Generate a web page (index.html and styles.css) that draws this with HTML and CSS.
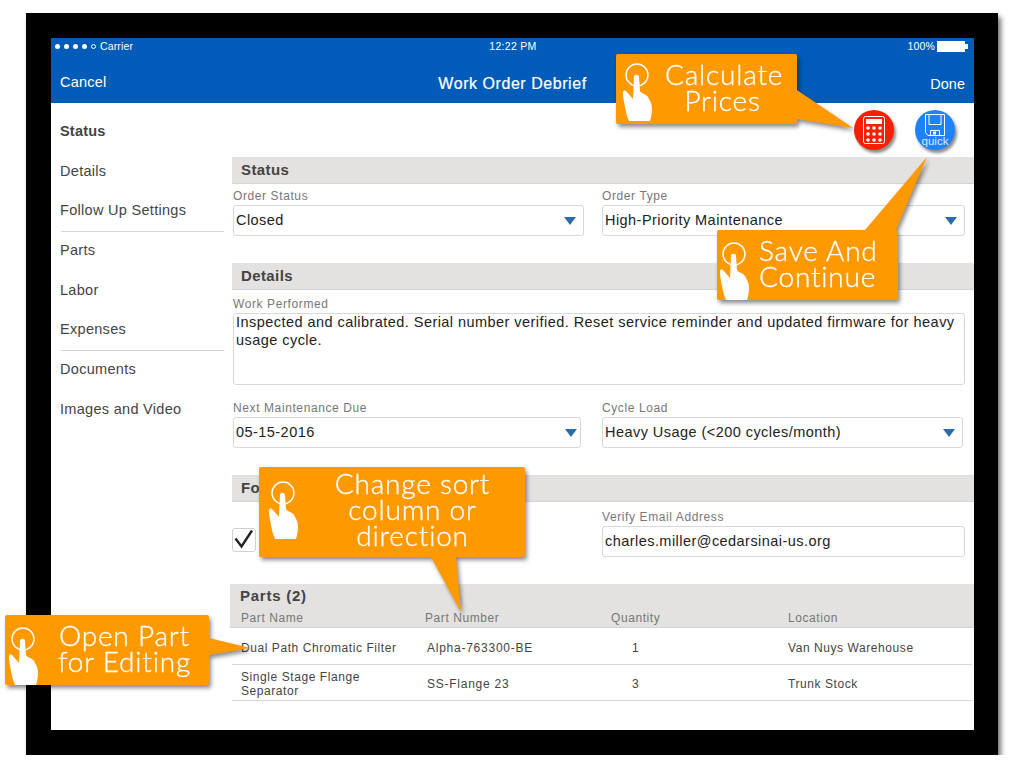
FILE: index.html
```html
<!DOCTYPE html>
<html lang="en">
<head>
    <meta charset="UTF-8">
    <meta name="viewport" content="width=device-width, initial-scale=1.0">
    <title>Work Order Debrief</title>
    <link rel="stylesheet" href="styles.css">
</head>
<body>

<svg width="0" height="0" class="defs">
    <symbol id="hand" viewBox="0 0 40 70">
        <circle cx="21" cy="21" r="11" fill="none" stroke="#fff" stroke-width="1.4"/>
        <path fill="#fff" d="M18 23c0-3 5-3 5 0l1 14c1 2 3 2 4 3 2 1 4 2 5 5 2 3 3 6 3 10 0 4-1 9-2 12H13c-2-4-3-9-4-14-1-5-2-10-2-14 0-3 2-3 4-1 2 2 4 5 6 7z"/>
    </symbol>
</svg>

<div class="frame">
    <div class="screen">
        <header class="topbar">
            <div class="statusbar">
                <div class="carrier">
                    <span class="dot"></span><span class="dot"></span><span class="dot"></span><span class="dot"></span><span class="dot empty"></span>
                    <span>Carrier</span>
                </div>
                <div class="clock">12:22 PM</div>
                <div class="battery-wrap">
                    <span>100%</span>
                    <span class="battery"></span>
                </div>
            </div>
            <div class="navbar">
                <span class="nav-cancel">Cancel</span>
                <span class="nav-title">Work Order Debrief</span>
                <span class="nav-done">Done</span>
            </div>
        </header>

        <div class="content">
            <nav class="sidebar">
                <a class="side-item active">Status</a>
                <a class="side-item">Details</a>
                <a class="side-item divided">Follow Up Settings</a>
                <a class="side-item">Parts</a>
                <a class="side-item">Labor</a>
                <a class="side-item divided">Expenses</a>
                <a class="side-item">Documents</a>
                <a class="side-item">Images and Video</a>
            </nav>

            <main class="form">
                <div class="actions">
                    <div class="round-btn red">
                        <svg width="22" height="28" viewBox="0 0 22 28" fill="none" stroke="#fff">
                            <rect x="0.5" y="0.5" width="21" height="27" rx="2"/>
                            <rect x="3" y="3" width="16" height="5" fill="#fff" stroke="none"/>
                            <g fill="#fff" stroke="none">
                                <circle cx="5" cy="12" r="1.8"/><circle cx="11" cy="12" r="1.8"/><circle cx="17" cy="12" r="1.8"/>
                                <circle cx="5" cy="18" r="1.8"/><circle cx="11" cy="18" r="1.8"/><circle cx="17" cy="18" r="1.8"/>
                                <circle cx="5" cy="24" r="1.8"/><circle cx="11" cy="24" r="1.8"/><circle cx="17" cy="24" r="1.8"/>
                            </g>
                        </svg>
                    </div>
                    <div class="round-btn blue">
                        <svg class="floppy" width="20" height="22" viewBox="0 0 20 22" fill="none" stroke="#fff">
                            <path d="M0.5 0.5h19v21H3l-2.5-3z"/>
                            <path d="M4 0.5v10h12V0.5"/>
                            <path d="M5.5 21.5v-5h9v5"/>
                            <rect x="8" y="17.5" width="3" height="3" fill="#fff" stroke="none"/>
                        </svg>
                        <span class="quick">quick</span>
                    </div>
                </div>

                <section class="section">
                    <h2 class="band">Status</h2>
                    <div class="row">
                        <div class="field w351">
                            <label class="lbl">Order Status</label>
                            <div class="box select">Closed</div>
                        </div>
                        <div class="field w363">
                            <label class="lbl">Order Type</label>
                            <div class="box select">High-Priority Maintenance</div>
                        </div>
                    </div>
                </section>

                <section class="section details">
                    <h2 class="band">Details</h2>
                    <div class="field field-area">
                        <label class="lbl">Work Performed</label>
                        <div class="box area">Inspected and calibrated. Serial number verified. Reset service reminder and updated firmware for heavy usage cycle.</div>
                    </div>
                    <div class="row row-next">
                        <div class="field w348">
                            <label class="lbl">Next Maintenance Due</label>
                            <div class="box select near">05-15-2016</div>
                        </div>
                        <div class="field w361">
                            <label class="lbl">Cycle Load</label>
                            <div class="box select">Heavy Usage (&lt;200 cycles/month)</div>
                        </div>
                    </div>
                </section>

                <section class="section follow">
                    <h2 class="band">Follow Up Settings</h2>
                    <div class="row row-follow">
                        <div class="check-col">
                            <div class="check">
                                <svg width="22" height="22" viewBox="0 0 22 22" fill="none" stroke="#222" stroke-width="2.4">
                                    <path d="M2.5 9.5l6 8L19 1.5"/>
                                </svg>
                            </div>
                        </div>
                        <div class="field w363">
                            <label class="lbl">Verify Email Address</label>
                            <div class="box">charles.miller@cedarsinai-us.org</div>
                        </div>
                    </div>
                </section>

                <section class="parts">
                    <div class="parts-head">
                        <h2 class="parts-title">Parts (2)</h2>
                        <div class="tr th">
                            <span>Part Name</span><span>Part Number</span><span>Quantity</span><span>Location</span>
                        </div>
                    </div>
                    <div class="tr td">
                        <span class="name">Dual Path Chromatic Filter</span><span class="num">Alpha-763300-BE</span><span class="qty">1</span><span>Van Nuys Warehouse</span>
                    </div>
                    <div class="tr td">
                        <span class="name">Single Stage Flange Separator</span><span class="num">SS-Flange 23</span><span class="qty">3</span><span>Trunk Stock</span>
                    </div>
                </section>
            </main>
        </div>
    </div>
</div>

<!-- callouts sit over the screenshot -->
<div class="callout c-calc">
    <svg class="tail" width="60" height="42" viewBox="0 0 60 42"><path fill="#ff9900" d="M0 0L56 38 0 29z"/></svg>
    <svg class="hand"><use href="#hand"/></svg>
    <div class="callout-text">Calculate<br>Prices</div>
</div>
<div class="callout c-save">
    <svg class="tail" width="66" height="75" viewBox="0 0 66 75"><path fill="#ff9900" d="M0 74L62 1 31 74z"/></svg>
    <svg class="hand"><use href="#hand"/></svg>
    <div class="callout-text">Save And<br>Continue</div>
</div>
<div class="callout c-sort">
    <svg class="tail" width="34" height="58" viewBox="0 0 34 58"><path fill="#ff9900" d="M0 0L30 55 25 0z"/></svg>
    <svg class="hand"><use href="#hand"/></svg>
    <div class="callout-text">Change sort<br>column or<br>direction</div>
</div>
<div class="callout c-open">
    <svg class="tail" width="44" height="20" viewBox="0 0 44 20"><path fill="#ff9900" d="M0 0L41 10 0 17z"/></svg>
    <svg class="hand"><use href="#hand"/></svg>
    <div class="callout-text">Open Part<br>for Editing</div>
</div>

</body>
</html>
```

FILE: styles.css
```css
/* page and device frame */
body {
    margin: 0;
    background-color: #fff;
    font-family: "Liberation Sans", Arial, sans-serif;
    color: #444;
}

.defs {
    display: block;
    height: 0;
}

.frame {
    width: 922px;
    height: 692px;
    margin: 13px 0 0 26px;
    padding: 25px;
    background-color: #000;
    box-shadow: 3px 4px 5px rgba(0, 0, 0, 0.55);
}

.screen {
    height: 692px;
    width: 923px;
    background-color: #fff;
    display: flex;
    flex-direction: column;
    overflow: hidden;
}

/* blue top bar */
.topbar {
    height: 65px;
    background-color: #005cb8;
    color: #fff;
}

.statusbar {
    height: 16px;
    padding: 0 1px 0 4px;
    display: grid;
    grid-template-columns: 1fr auto 1fr;
    align-items: center;
    font-size: 10.5px;
    letter-spacing: 0.15px;
}

.carrier {
    display: flex;
    align-items: center;
    gap: 4px;
}

.dot {
    width: 5px;
    height: 5px;
    border-radius: 50%;
    background-color: #fff;
}

.dot.empty {
    width: 3px;
    height: 3px;
    background-color: transparent;
    border: 1px solid #fff;
}

.clock {
    letter-spacing: 0.3px;
    margin-left: -2px;
}

.battery-wrap {
    display: flex;
    justify-content: flex-end;
    align-items: center;
    gap: 2px;
    padding-right: 8px;
}

.battery {
    width: 28px;
    height: 11px;
    background-color: #fff;
    position: relative;
}

.battery::after {
    content: "";
    position: absolute;
    right: -3px;
    top: 3px;
    width: 3px;
    height: 5px;
    background-color: #fff;
}

.navbar {
    display: grid;
    grid-template-columns: 1fr auto 1fr;
    align-items: center;
    height: 49px;
    box-sizing: border-box;
    padding: 11px 9px 0;
}

.nav-cancel {
    font-size: 14.5px;
    letter-spacing: 0.2px;
    margin-top: -4px;
}

.nav-title {
    font-size: 16px;
    letter-spacing: 0.55px;
    -webkit-text-stroke: 0.2px #fff;
}

.nav-done {
    font-size: 14.5px;
    text-align: right;
}

/* sidebar + form */
.content {
    flex: 1;
    display: flex;
}

.sidebar {
    width: 181px;
    box-sizing: border-box;
    padding: 9px 8px 0 9px;
    flex-shrink: 0;
}

.side-item {
    display: block;
    height: 39.7px;
    line-height: 39px;
    font-size: 14.5px;
    letter-spacing: 0.3px;
    box-sizing: border-box;
}

.side-item.active {
    font-weight: bold;
    letter-spacing: 0.2px;
}

.side-item.divided {
    height: 40.7px;
    margin: 0 0 -1px 1px;
    border-bottom: 1px solid #d6d6d6;
    text-indent: -1px;
}

.form {
    flex: 1;
    min-width: 0;
}

.actions {
    height: 54px;
    box-sizing: border-box;
    padding: 7px 19px 0 0;
    display: flex;
    justify-content: flex-end;
    gap: 21px;
}

.round-btn {
    width: 40px;
    height: 40px;
    border-radius: 50%;
    box-shadow: 2px 3px 3px rgba(0, 0, 0, 0.45);
    display: flex;
    align-items: center;
    justify-content: center;
    position: relative;
}

.red {
    background-color: #f52000;
}

.blue {
    background-color: #1e82fa;
    align-items: flex-start;
}

.floppy {
    margin-top: 4px;
}

.quick {
    position: absolute;
    left: 0;
    right: 0;
    top: 24px;
    text-align: center;
    font-size: 11.5px;
    line-height: 14px;
    color: #dcebff;
}

.section {
    height: 106px;
}

.section.details {
    height: 212px;
}

.section.follow {
    height: 109px;
}

.band {
    margin: 0;
    height: 26px;
    line-height: 26px;
    padding-left: 9px;
    background-color: #e3e2e0;
    border-bottom: 1px solid #d4d4d4;
    font-size: 15px;
    letter-spacing: 0.4px;
    font-weight: bold;
    color: #444;
}

.row {
    display: flex;
    justify-content: space-between;
    padding-right: 9px;
    align-items: flex-end;
}

.row-next {
    padding-right: 11px;
    margin-top: 11px;
}

.row-follow {
    padding-top: 3px;
}

.field {
    padding-left: 1px;
}

.w351 { width: 351px; }
.w363 { width: 363px; padding-left: 0; }
.w348 { width: 348px; }
.w361 { width: 361px; padding-left: 0; }

.field-area {
    margin-right: 9px;
}

.field-area .lbl {
    height: 23px;
    line-height: 28px;
}

.lbl {
    display: block;
    height: 21px;
    line-height: 25px;
    font-size: 12px;
    letter-spacing: 0.6px;
    color: #777;
}

.box {
    height: 29px;
    line-height: 29px;
    padding: 0 2px;
    border: 1px solid #d8d8d8;
    border-radius: 3px;
    font-size: 14.5px;
    letter-spacing: 0.45px;
    color: #222;
    position: relative;
    background-color: #fff;
}

.select::after {
    content: "";
    position: absolute;
    right: 7px;
    top: 11px;
    border-left: 6px solid transparent;
    border-right: 6px solid transparent;
    border-top: 8px solid #2d6ca8;
}

.select.near::after {
    right: 3px;
}

.box.area {
    height: 70px;
    line-height: 17.5px;
    white-space: normal;
}

.check-col {
    width: 370px;
    padding-bottom: 5px;
}

.check {
    width: 22px;
    height: 22px;
    border: 1px solid #d0d0d0;
    border-radius: 3px;
}

.check svg {
    display: block;
}

/* parts table */
.parts {
    margin-left: -2px;
}

.parts-head {
    background-color: #e3e2e0;
    border-bottom: 1px solid #d4d4d4;
    height: 43px;
}

.parts-title {
    margin: 0;
    padding: 3px 0 3px 10px;
    line-height: 17px;
    font-size: 15px;
    letter-spacing: 0.75px;
    font-weight: bold;
    color: #444;
}

.tr {
    display: grid;
    grid-template-columns: 184px 186px 177px 1fr;
    padding-left: 11px;
    font-size: 12px;
    letter-spacing: 0.57px;
    align-items: center;
}

.th {
    color: #777;
    height: 22px;
}

.td {
    height: 36px;
    box-sizing: border-box;
    margin: 0 2px 0 2px;
    padding: 2px 0 0 9px;
    border-bottom: 1px solid #d6d6d6;
    color: #444;
    line-height: 14px;
}

.td:nth-child(2) {
    height: 37px;
    padding-top: 3px;
}

.name {
    padding-right: 14px;
}

.num {
    padding-left: 2px;
    letter-spacing: 0.75px;
}

.qty {
    padding-left: 21px;
}

/* orange callouts */
.callout {
    position: absolute;
    background-color: #ff9900;
    border-radius: 2px;
    filter: drop-shadow(2px 3px 2px rgba(0, 0, 0, 0.45));
    color: #fff;
    font-family: Lato, sans-serif;
    font-weight: 300;
    font-size: 28px;
    line-height: 26px;
    letter-spacing: 0.8px;
    -webkit-text-stroke: 0.3px #fff;
}

.callout .hand {
    position: absolute;
    width: 40px;
    height: 70px;
}

.callout .tail {
    position: absolute;
}

.callout-text {
    position: relative;
    text-align: center;
    white-space: nowrap;
}

.c-calc {
    left: 616px;
    top: 54px;
    width: 181px;
    height: 70px;
}

.c-calc .hand {
    left: 0;
    top: 0;
}

.c-calc .tail {
    left: 181px;
    top: 36px;
}

.c-calc .callout-text {
    padding: 7px 0 0 49px;
    width: 115px;
}

.c-save {
    left: 717px;
    top: 230px;
    width: 181px;
    height: 70px;
}

.c-save .hand {
    left: -4px;
    top: 3px;
}

.c-save .tail {
    left: 148px;
    top: -74px;
}

.c-save .callout-text {
    padding: 7px 0 0 42px;
    text-align: left;
}

.c-sort {
    left: 259px;
    top: 467px;
    width: 266px;
    height: 90px;
}

.c-sort .hand {
    left: 3px;
    top: 5px;
}

.c-sort .tail {
    left: 172px;
    top: 90px;
}

.c-sort .callout-text {
    padding: 3px 0 0 62px;
    width: 183px;
}

.c-open {
    left: 5px;
    top: 615px;
    width: 204px;
    height: 70px;
}

.c-open .hand {
    left: -3px;
    top: 3px;
}

.c-open .tail {
    left: 204px;
    top: 23px;
}

.c-open .callout-text {
    padding: 7px 0 0 53px;
    width: 133px;
}
```
